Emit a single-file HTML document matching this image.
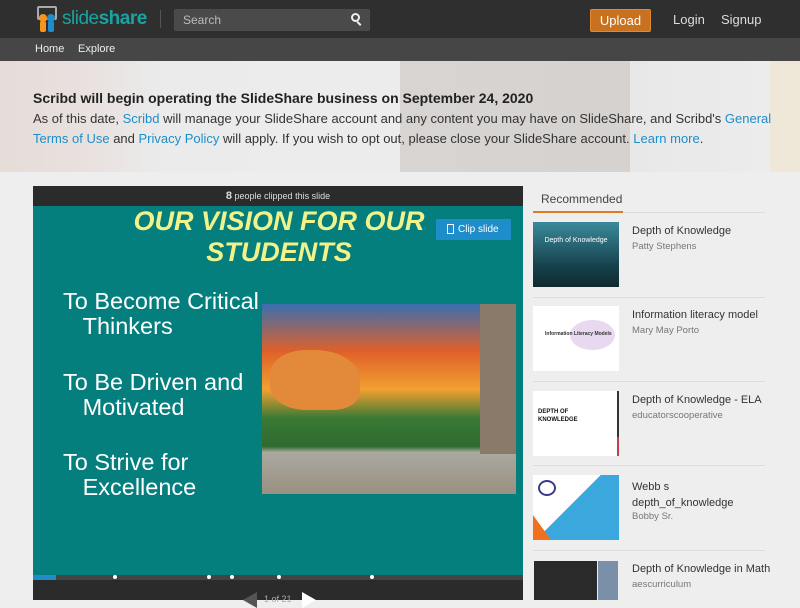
<!DOCTYPE html>
<html><head><style>
*{margin:0;padding:0;box-sizing:border-box}
body{width:800px;height:600px;overflow:hidden;background:#eeeeee;font-family:"Liberation Sans",sans-serif;position:relative}
.a{position:absolute}
a{color:#1f8dc9;text-decoration:none}
</style></head><body>
<div class="a" style="left:0;top:0;width:800px;height:38px;background:#2f2f2f"></div>
<div class="a" style="left:35px;top:6px;width:24px;height:26px">
<div class="a" style="left:2px;top:0;width:20px;height:14px;border:2px solid #aaa;border-radius:2px"></div>
<div class="a" style="left:4px;top:8px;width:8px;height:8px;border-radius:50%;background:#f7941d"></div>
<div class="a" style="left:12px;top:8px;width:8px;height:8px;border-radius:50%;background:#1f8dc9"></div>
<div class="a" style="left:5px;top:15px;width:6px;height:11px;background:#f7941d;border-radius:2px"></div>
<div class="a" style="left:13px;top:15px;width:6px;height:11px;background:#1f8dc9;border-radius:2px"></div>
</div>
<div class="a" style="left:62px;top:8px;font-size:19px;color:#1aa3a3;letter-spacing:-0.5px">slide<b>share</b></div>
<div class="a" style="left:160px;top:10px;width:1px;height:18px;background:#555"></div>
<div class="a" style="left:174px;top:9px;width:196px;height:22px;background:#4a4a4a;border-radius:2px"></div>
<div class="a" style="left:183px;top:13px;font-size:12px;color:#bbb">Search</div>
<div class="a" style="left:351px;top:13px;width:9px;height:9px;border:2px solid #eee;border-radius:50%"></div>
<div class="a" style="left:358px;top:21px;width:2px;height:5px;background:#eee;transform:rotate(-45deg)"></div>
<div class="a" style="left:590px;top:9px;width:61px;height:23px;background:#c8711f;border:1px solid #e08a35;border-radius:2px;color:#fff;font-size:13px;text-align:center;line-height:21px">Upload</div>
<div class="a" style="left:673px;top:12px;font-size:13px;color:#ddd">Login</div>
<div class="a" style="left:721px;top:12px;font-size:13px;color:#ddd">Signup</div>
<div class="a" style="left:0;top:38px;width:800px;height:23px;background:#464646"></div>
<div class="a" style="left:35px;top:43px;font-size:11px;color:#eee">Home</div>
<div class="a" style="left:78px;top:43px;font-size:11px;color:#eee">Explore</div>
<div class="a" style="left:0;top:61px;width:800px;height:111px;background:linear-gradient(90deg,#e6dcd8 0,#e9e2e0 100px,#ebebeb 160px,#ececec 400px,#d8d4d2 400px,#d6d2d0 630px,#e8e8e8 630px,#ececec 770px,#efe8d8 770px)"></div>
<div class="a" style="left:33px;top:90px;font-size:14px;font-weight:bold;color:#222">Scribd will begin operating the SlideShare business on September 24, 2020</div>
<div class="a" style="left:33px;top:109px;width:740px;font-size:13px;color:#333;line-height:20px">As of this date, <a>Scribd</a> will manage your SlideShare account and any content you may have on SlideShare, and Scribd's <a>General Terms of Use</a> and <a>Privacy Policy</a> will apply. If you wish to opt out, please close your SlideShare account. <a>Learn more</a>.</div>
<div class="a" style="left:33px;top:186px;width:490px;height:414px;background:#2b2b2b"></div>
<div class="a" style="left:33px;top:190px;width:490px;text-align:center;font-size:9px;color:#ddd"><b style="font-size:11px">8</b> people clipped this slide</div>
<div class="a" style="left:33px;top:206px;width:490px;height:369px;background:#047f7e"></div>
<div class="a" style="left:33px;top:206px;width:492px;text-align:center;font-size:27px;font-weight:bold;font-style:italic;color:#f2f28a;line-height:31px">OUR VISION FOR OUR<br>STUDENTS</div>
<div class="a" style="left:436px;top:219px;width:75px;height:21px;background:#1f8dc9;color:#fff;font-size:10px;line-height:21px;padding-left:22px">Clip slide</div>
<div class="a" style="left:447px;top:224px;width:7px;height:10px;border:1.5px solid #fff"></div>
<div class="a" style="left:63px;top:289px;font-size:23.5px;color:#fff;line-height:25px">To Become Critical<br>&nbsp;&nbsp;&nbsp;Thinkers</div>
<div class="a" style="left:63px;top:370px;font-size:23.5px;color:#fff;line-height:25px">To Be Driven and<br>&nbsp;&nbsp;&nbsp;Motivated</div>
<div class="a" style="left:63px;top:450px;font-size:23.5px;color:#fff;line-height:25px">To Strive for<br>&nbsp;&nbsp;&nbsp;Excellence</div>
<div class="a" style="left:262px;top:304px;width:254px;height:190px;background:linear-gradient(180deg,#3a6fb0 0,#e0602a 25%,#f2a030 45%,#3a7a35 60%,#2f6a30 75%,#a9a9a0 78%,#9a9080 100%)"></div>
<div class="a" style="left:480px;top:304px;width:36px;height:150px;background:#8a7a6a"></div>
<div class="a" style="left:270px;top:350px;width:90px;height:60px;background:#e28a3a;border-radius:40% 50% 30% 40%"></div>
<div class="a" style="left:33px;top:575px;width:490px;height:5px;background:#444"></div>
<div class="a" style="left:33px;top:575px;width:23px;height:5px;background:#1f8dc9"></div>
<div class="a" style="left:113px;top:575px;width:4px;height:4px;border-radius:50%;background:#fff"></div>
<div class="a" style="left:207px;top:575px;width:4px;height:4px;border-radius:50%;background:#fff"></div>
<div class="a" style="left:230px;top:575px;width:4px;height:4px;border-radius:50%;background:#fff"></div>
<div class="a" style="left:277px;top:575px;width:4px;height:4px;border-radius:50%;background:#fff"></div>
<div class="a" style="left:370px;top:575px;width:4px;height:4px;border-radius:50%;background:#fff"></div>
<div class="a" style="left:243px;top:592px;width:0;height:0;border-right:14px solid #555;border-top:8px solid transparent;border-bottom:8px solid transparent"></div>
<div class="a" style="left:264px;top:594px;font-size:9px;color:#aaa">1 of 21</div>
<div class="a" style="left:302px;top:592px;width:0;height:0;border-left:14px solid #fff;border-top:8px solid transparent;border-bottom:8px solid transparent"></div>
<div class="a" style="left:541px;top:192px;font-size:12px;color:#444">Recommended</div>
<div class="a" style="left:533px;top:212px;width:232px;height:1px;background:#ddd"></div>
<div class="a" style="left:533px;top:211px;width:90px;height:2px;background:#e07b25"></div>
<div class="a" style="left:533px;top:222px;width:86px;height:65px;background:linear-gradient(180deg,#3a8a9a,#15404a 70%,#102a30)"></div>
<div class="a" style="left:533px;top:237px;width:86px;text-align:center;font-size:7px;color:#fff">Depth of Knowledge</div>
<div class="a" style="left:632px;top:225px;font-size:11px;color:#333">Depth of Knowledge</div>
<div class="a" style="left:632px;top:241px;font-size:9.5px;color:#777">Patty Stephens</div>
<div class="a" style="left:533px;top:297px;width:232px;height:1px;background:#ddd"></div>
<div class="a" style="left:533px;top:306px;width:86px;height:65px;background:#fff"></div>
<div class="a" style="left:570px;top:320px;width:45px;height:30px;border-radius:50%;background:#e8d8f0"></div>
<div class="a" style="left:545px;top:331px;font-size:5px;font-weight:bold;color:#333">Information Literacy Models</div>
<div class="a" style="left:632px;top:309px;font-size:11px;color:#333">Information literacy model</div>
<div class="a" style="left:632px;top:325px;font-size:9.5px;color:#777">Mary May Porto</div>
<div class="a" style="left:533px;top:381px;width:232px;height:1px;background:#ddd"></div>
<div class="a" style="left:533px;top:391px;width:86px;height:65px;background:#fff"></div>
<div class="a" style="left:617px;top:391px;width:2px;height:46px;background:#333"></div>
<div class="a" style="left:617px;top:437px;width:2px;height:19px;background:#c04050"></div>
<div class="a" style="left:538px;top:408px;font-size:6px;font-weight:bold;color:#111;line-height:8px">DEPTH OF<br>KNOWLEDGE</div>
<div class="a" style="left:632px;top:394px;font-size:11px;color:#333">Depth of Knowledge - ELA</div>
<div class="a" style="left:632px;top:410px;font-size:9.5px;color:#777">educatorscooperative</div>
<div class="a" style="left:533px;top:465px;width:232px;height:1px;background:#ddd"></div>
<div class="a" style="left:533px;top:475px;width:86px;height:65px;background:linear-gradient(135deg,#fff 45%,#3aa8dc 45%)"></div>
<div class="a" style="left:533px;top:515px;width:0;height:0;border-left:18px solid #f07020;border-top:25px solid transparent"></div>
<div class="a" style="left:538px;top:480px;width:18px;height:16px;border-radius:50%;border:2px solid #3a3a8a"></div>
<div class="a" style="left:632px;top:479px;font-size:11px;color:#333;line-height:16px">Webb s<br>depth_of_knowledge</div>
<div class="a" style="left:632px;top:511px;font-size:9.5px;color:#777">Bobby Sr.</div>
<div class="a" style="left:533px;top:550px;width:232px;height:1px;background:#ddd"></div>
<div class="a" style="left:534px;top:561px;width:63px;height:39px;background:#2a2a2a"></div>
<div class="a" style="left:598px;top:561px;width:20px;height:39px;background:#7a90a8"></div>
<div class="a" style="left:632px;top:563px;font-size:11px;color:#333">Depth of Knowledge in Math</div>
<div class="a" style="left:632px;top:579px;font-size:9.5px;color:#777">aescurriculum</div>
</body></html>
